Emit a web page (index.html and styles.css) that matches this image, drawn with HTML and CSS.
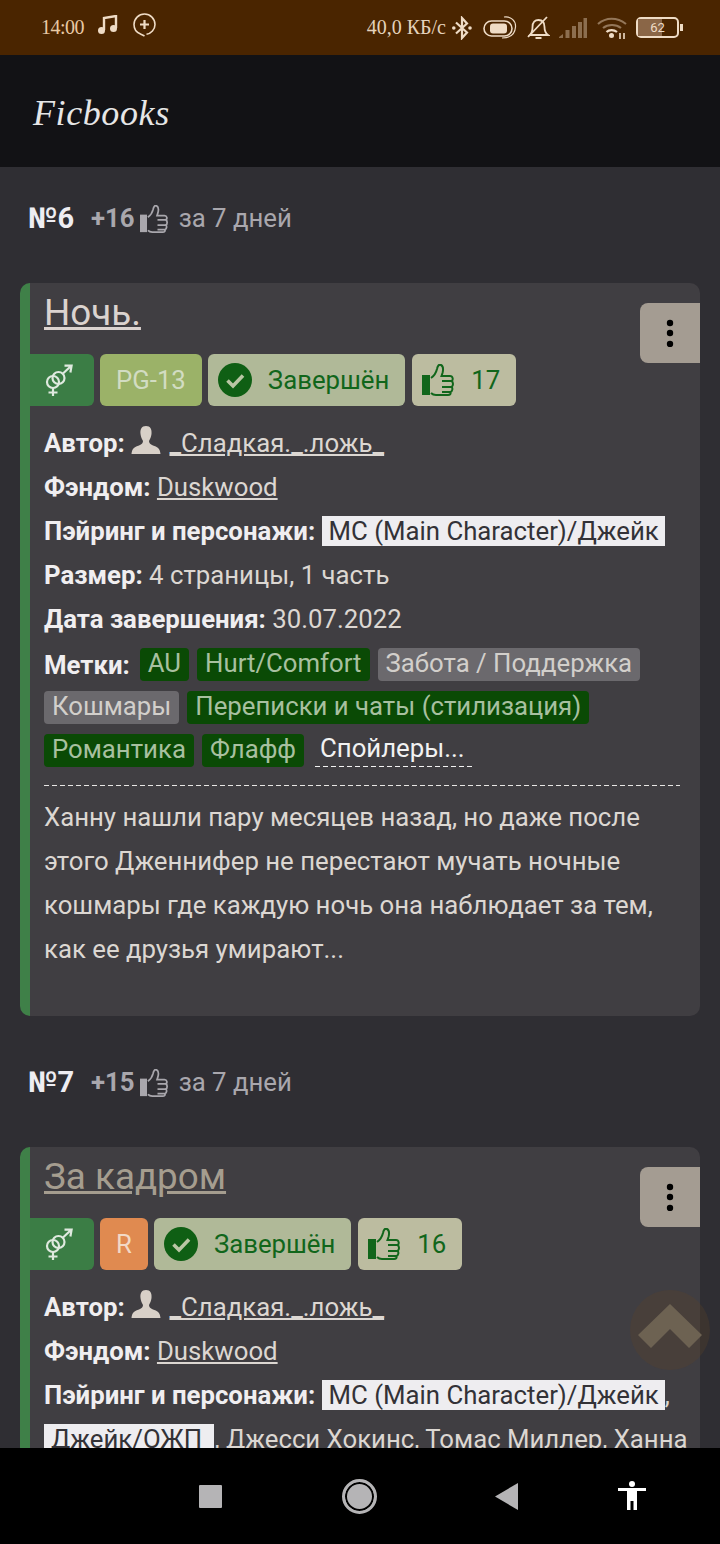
FILE: index.html
```html
<!doctype html>
<html lang="ru">
<head>
    <meta charset="UTF-8">
    <meta name="viewport" content="width=device-width, initial-scale=1.0">
    <link rel="stylesheet" href="styles.css">
    <title>Ficbooks</title>
</head>
<body>
<svg class="defs" width="0" height="0">
    <symbol id="thumb" viewBox="0 0 32 32">
        <rect x="0" y="11" width="8" height="20" fill="currentColor"/>
        <path d="M9 14 C12 12 14 9 15 5 C15.5 2 17 0 19 1 C21 2 21.5 5 20.5 9 L19.5 12 H28 C31 12 31.5 16 29.5 17 C31.5 18 31.5 22 29.5 23 C31 24 30.5 27.5 28.5 28 C29 30 28 31 26 31 H14 C12 31 10 30 9 29 M20 17 H29 M20 23 H29 M20 28 H28" fill="none" stroke="currentColor" stroke-width="2"/>
    </symbol>
    <symbol id="gender" viewBox="0 0 28 33">
        <g fill="none" stroke="currentColor" stroke-width="2.2">
            <circle cx="8" cy="18" r="6"/>
            <circle cx="13.500" cy="14" r="6"/>
            <path d="M18 9.500 L26 2 M19.500 1.600 H26.600 L25.400 8.500 M8 24 V32 M3.500 28.500 H12.500"/>
        </g>
    </symbol>
    <symbol id="check" viewBox="0 0 34 34">
        <circle cx="17" cy="17" r="17" fill="#0f5f14"/>
        <path d="M9.5 17.5 L15 23 L25 12.5" fill="none" stroke="#b9c6a4" stroke-width="3.6"/>
    </symbol>
    <symbol id="person" viewBox="0 0 30 28">
        <path d="M15 0 C19.5 0 21 3.5 20.5 8 C20.2 11 19 13 18 15 C18 17 19 18 22 19.5 C26 21 29 22 29.500 28 H0.500 C1 22 4 21 8 19.5 C11 18 12 17 12 15 C11 13 9.800 11 9.500 8 C9 3.500 10.500 0 15 0 Z" fill="currentColor"/>
    </symbol>
    <symbol id="dots" viewBox="0 0 8 28">
        <circle cx="4" cy="4" r="3.200" fill="#000"/>
        <circle cx="4" cy="14" r="3.200" fill="#000"/>
        <circle cx="4" cy="25" r="3.200" fill="#000"/>
    </symbol>
</svg>

<header class="status-bar">
    <span class="status-time">14:00</span>
    <svg class="icon-music" width="20" height="20" viewBox="0 0 20 20">
        <path d="M6 15 V3 L18 1 V13" fill="none" stroke="currentColor" stroke-width="2.400"/>
        <circle cx="3.500" cy="15.500" r="3.500" fill="currentColor"/>
        <circle cx="15.500" cy="13.500" r="3.500" fill="currentColor"/>
    </svg>
    <svg class="icon-chat" width="23" height="25" viewBox="0 0 23 25">
        <path d="M11.500 23 C9.500 21.800 8.500 21.500 7.500 21 C3.500 19.500 1 16 1 11.500 C1 5.700 5.700 1 11.500 1 C17.300 1 22 5.700 22 11.500 C22 16.500 18 20.500 13.500 21.300" fill="none" stroke="currentColor" stroke-width="1.600"/>
        <path d="M11.500 7 V16 M7 11.500 H16" stroke="currentColor" stroke-width="2.200"/>
    </svg>
    <span class="status-speed">40,0 КБ/с</span>
    <svg class="icon-bt" width="20" height="24" viewBox="0 0 20 24">
        <path d="M4 6.500 L15 16.500 L10 22 V2 L15 7.500 L4 17.500" fill="none" stroke="currentColor" stroke-width="2.200"/>
        <circle cx="1.800" cy="12" r="1.800" fill="currentColor"/>
        <circle cx="18" cy="12" r="1.800" fill="currentColor"/>
    </svg>
    <svg class="icon-pill" width="34" height="24" viewBox="0 0 34 24">
        <rect x="1" y="5" width="28" height="15" rx="7.500" fill="none" stroke="currentColor" stroke-width="1.600"/>
        <rect x="7" y="7.500" width="17" height="10" rx="3" fill="currentColor"/>
        <path d="M21 1 C28 0 33 5 32.500 11 C32 18 27 22 19 22" fill="none" stroke="currentColor" stroke-width="1.200"/>
    </svg>
    <svg class="icon-bell" width="23" height="24" viewBox="0 0 23 24">
        <path d="M3 19 C5 17 5.500 14 5.500 11 C5.500 6 8 4 11.500 4 C15 4 17.500 6 17.500 11 C17.500 14 18 17 21 19 Z M8.500 22 H14.500" fill="none" stroke="currentColor" stroke-width="1.800"/>
        <path d="M1 21 L20 1" stroke="currentColor" stroke-width="1.800"/>
    </svg>
    <svg class="icon-signal" width="28" height="20" viewBox="0 0 28 20">
        <g fill="currentColor" opacity="0.4">
            <path d="M0 19 L4 16 V20 H0 Z"/>
            <rect x="6.500" y="12" width="4" height="8"/>
            <rect x="13" y="8" width="4" height="12"/>
            <rect x="19" y="4" width="4" height="16"/>
            <rect x="24.500" y="0" width="3.500" height="20"/>
        </g>
    </svg>
    <svg class="icon-wifi" width="30" height="22" viewBox="0 0 30 22">
        <g fill="none" stroke="currentColor" stroke-width="2.200">
            <path d="M1 7 C9 0 20 0 29 7" opacity="0.45"/>
            <path d="M6 11 C11 7 19 7 24 11" opacity="0.45"/>
            <path d="M9.500 15 C12 12.500 17 12.500 20 15"/>
        </g>
        <circle cx="14.500" cy="18.500" r="2.500" fill="currentColor"/>
        <path d="M23 16 V22 M27 16 V22" stroke="currentColor" stroke-width="1.600"/>
    </svg>
    <div class="battery">
        <div class="battery-body">
            <div class="battery-fill"></div>
            <span class="battery-num">62</span>
        </div>
        <div class="battery-tip"></div>
    </div>
</header>

<div class="toolbar">Ficbooks</div>

<main class="content">
    <h2 class="top-head">
        <span class="top-num">№6</span>
        <b class="top-plus">+16</b>
        <svg class="icon-thumb-small"><use href="#thumb"/></svg>
        <span class="top-days">за 7 дней</span>
    </h2>

    <article class="card">
        <a class="card-title" href="#">Ночь.</a>
        <button class="card-menu"><svg width="8" height="28"><use href="#dots"/></svg></button>
        <div class="badges">
            <span class="badge badge-gender"><svg width="28" height="33"><use href="#gender"/></svg></span>
            <span class="badge badge-pg">PG-13</span>
            <span class="badge badge-status"><svg width="34" height="34"><use href="#check"/></svg>Завершён</span>
            <span class="badge badge-like"><svg width="32" height="32"><use href="#thumb"/></svg>17</span>
        </div>
        <div class="meta"><b>Автор:</b> <svg class="icon-person"><use href="#person"/></svg> <a href="#">_Сладкая._.ложь_</a></div>
        <div class="meta"><b>Фэндом:</b> <a href="#">Duskwood</a></div>
        <div class="meta"><b>Пэйринг и персонажи:</b> <span class="pairing">МС (Main Character)/Джейк</span></div>
        <div class="meta"><b>Размер:</b> 4 страницы, 1 часть</div>
        <div class="meta"><b>Дата завершения:</b> 30.07.2022</div>
        <div class="tags">
            <b class="tags-label">Метки:</b>
            <span class="tag tag-green">AU</span>
            <span class="tag tag-green">Hurt/Comfort</span>
            <span class="tag tag-gray">Забота / Поддержка</span>
            <span class="tag tag-gray">Кошмары</span>
            <span class="tag tag-green">Переписки и чаты (стилизация)</span>
            <span class="tag tag-green">Романтика</span>
            <span class="tag tag-green">Флафф</span>
            <span class="spoilers">Спойлеры...</span>
        </div>
        <hr class="divider">
        <p class="descr">Ханну нашли пару месяцев назад, но даже после этого Дженнифер не перестают мучать ночные кошмары где каждую ночь она наблюдает за тем, как ее друзья умирают...</p>
    </article>

    <h2 class="top-head">
        <span class="top-num">№7</span>
        <b class="top-plus">+15</b>
        <svg class="icon-thumb-small"><use href="#thumb"/></svg>
        <span class="top-days">за 7 дней</span>
    </h2>

    <article class="card">
        <a class="card-title visited" href="#">За кадром</a>
        <button class="card-menu"><svg width="8" height="28"><use href="#dots"/></svg></button>
        <div class="badges">
            <span class="badge badge-gender"><svg width="28" height="33"><use href="#gender"/></svg></span>
            <span class="badge badge-r">R</span>
            <span class="badge badge-status"><svg width="34" height="34"><use href="#check"/></svg>Завершён</span>
            <span class="badge badge-like"><svg width="32" height="32"><use href="#thumb"/></svg>16</span>
        </div>
        <div class="meta"><b>Автор:</b> <svg class="icon-person"><use href="#person"/></svg> <a href="#">_Сладкая._.ложь_</a></div>
        <div class="meta"><b>Фэндом:</b> <a href="#">Duskwood</a></div>
        <div class="meta"><b>Пэйринг и персонажи:</b> <span class="pairing">МС (Main Character)/Джейк</span>, <span class="pairing">Джейк/ОЖП&nbsp;</span>, Джесси Хокинс, Томас Миллер, Ханна</div>
    </article>

    <button class="scroll-top">
        <svg width="64" height="44" viewBox="0 0 64 44"><path d="M32 0 L64 31 L51 44 L32 25 L13 44 L0 31 Z" fill="#6d6252"/></svg>
    </button>
</main>

<nav class="nav-bar">
    <div class="nav-square"></div>
    <div class="nav-circle"></div>
    <svg class="nav-back" width="23" height="27" viewBox="0 0 23 27"><path d="M23 0 V27 L0 13.500 Z" fill="#b5b4b6"/></svg>
    <svg class="nav-access" width="28" height="30" viewBox="0 0 28 30">
        <circle cx="14" cy="3" r="3" fill="#fff"/>
        <path d="M0 7 H28 V10 H19 V29 H15.500 V20 H12.500 V29 H9 V10 H0 Z" fill="#fff"/>
    </svg>
</nav>
</body>
</html>
```

FILE: styles.css
```css
* {
    box-sizing: border-box;
}

html, body {
    height: 100%;
}

body {
    display: flex;
    flex-direction: column;
    width: 720px;
    height: 1544px;
    margin: 0;
    overflow: hidden;
    color: #dcd7d2;
    background: #2f2e33;
    font-family: Roboto, sans-serif;
    font-size: 25.75px;
}

.defs {
    position: absolute;
}

a {
    color: inherit;
}

/* status bar */
.status-bar {
    display: flex;
    flex: none;
    align-items: center;
    height: 55px;
    padding: 0 37px 0 41px;
    color: #efdcc6;
    background: #4a2500;
}

.status-time, .status-speed {
    font-family: "Liberation Serif", serif;
    font-size: 20px;
    letter-spacing: -0.5px;
    color: #e8c9a5;
}

.status-speed {
    margin-left: auto;
    letter-spacing: 0;
    color: #e4d2bc;
    white-space: nowrap;
}

.icon-music {
    margin-left: 14px;
    margin-bottom: 6px;
}

.icon-chat {
    margin-left: 15px;
    margin-bottom: 4px;
}

.icon-bt {
    margin-left: 6px;
}

.icon-pill {
    margin-left: 11px;
}

.icon-bell {
    margin-left: 10px;
}

.icon-signal {
    margin-left: 9px;
}

.icon-wifi {
    margin-left: 10px;
}

.battery {
    display: flex;
    align-items: center;
    margin-left: 9px;
}

.battery-body {
    position: relative;
    width: 43px;
    height: 21px;
    border: 2px solid #efdcc6;
    border-radius: 5px;
}

.battery-fill {
    width: 62%;
    height: 100%;
    background: #8a6647;
}

.battery-num {
    position: absolute;
    top: 0;
    left: 0;
    width: 100%;
    font-size: 13px;
    line-height: 17px;
    text-align: center;
    color: #efdcc6;
}

.battery-tip {
    width: 3px;
    height: 7px;
    margin-left: 1px;
    background: #efdcc6;
}

/* app toolbar */
.toolbar {
    flex: none;
    height: 112px;
    padding-left: 33px;
    color: #e6e6e6;
    background: #121215;
    font-family: "Liberation Serif", serif;
    font-style: italic;
    font-size: 36px;
    line-height: 116px;
    letter-spacing: 0.6px;
}

/* list */
.content {
    position: relative;
    flex: 1;
    min-height: 0;
    padding: 35px 20px 0;
    overflow: hidden;
}

.top-head {
    display: flex;
    align-items: center;
    height: 31px;
    margin: 0 0 50px;
    padding-left: 8px;
    color: #a9a7ad;
    font-size: 25.75px;
    font-weight: 400;
}

.top-num {
    margin-right: 17px;
    color: #eeedf2;
    font-size: 29px;
    font-weight: 700;
}

.icon-thumb-small {
    width: 28px;
    height: 28px;
    margin: 2px 11px 0 5px;
}

.card {
    position: relative;
    margin-bottom: 50px;
    padding: 8px 10px 45px 14px;
    border-left: 10px solid #3f8048;
    border-radius: 10px;
    background: #403e42;
}

.card-title {
    display: block;
    width: max-content;
    color: #dbd3cf;
    font-size: 36.800px;
    line-height: 44px;
}

.card-title.visited {
    color: #a59d8f;
}

.card-menu {
    position: absolute;
    top: 20px;
    right: 0;
    display: flex;
    align-items: center;
    justify-content: center;
    width: 60px;
    height: 60px;
    padding: 0;
    border: 0;
    border-radius: 8px 0 0 8px;
    background: #a49c92;
}

.badges {
    display: flex;
    gap: 6px;
    margin: 19px 0 15px -14px;
}

.badge {
    display: flex;
    align-items: center;
    height: 52px;
    padding: 0 16px;
    border-radius: 6px;
    white-space: nowrap;
}

.badge-gender {
    justify-content: center;
    width: 64px;
    padding: 0 6px 0 0;
    border-radius: 0 6px 6px 0;
    color: #dfe9df;
    background: #3b7d45;
}

.badge-pg {
    color: #d2dcc2;
    background: #9bb268;
}

.badge-r {
    color: #f2d9c6;
    background: #e08a50;
}

.badge-status {
    padding: 0 16px 0 10px;
    color: #11661b;
    background: #b0b998;
}

.badge-status svg {
    margin-right: 16px;
}

.badge-like {
    margin-left: 1px;
    padding: 0 16px 0 10px;
    color: #11661b;
    background: #bcbca0;
}

.badge-like svg {
    margin-right: 17px;
}

.meta {
    line-height: 44px;
}

.meta b, .tags-label {
    color: #f0eef0;
    font-weight: 700;
}

.icon-person {
    width: 30px;
    height: 28px;
    margin: 0 2px 0 0;
    color: #d8d0c8;
    vertical-align: -2px;
}

.pairing {
    padding: 0 6px 0 7px;
    color: #333237;
    background: #eeedf0;
}

.tags {
    display: flex;
    flex-wrap: wrap;
    align-items: center;
    gap: 10px 8px;
    margin-top: 7px;
    padding-right: 4px;
}

.tags-label {
    margin-right: 2px;
}

.tag {
    height: 33px;
    padding: 0 8px;
    border-radius: 4px;
    line-height: 31px;
}

.tag-green {
    color: #a8c0a0;
    background: #0a4a05;
}

.tag-gray {
    color: #d2cfcb;
    background: #6b696d;
}

.spoilers {
    height: 33px;
    margin-left: 3px;
    padding: 0 7px 0 5px;
    background: repeating-linear-gradient(90deg, #f2f2f2 0 5px, transparent 5px 8px) left bottom / 100% 1px no-repeat;
    color: #f2f2f2;
    line-height: 29px;
}

.divider {
    height: 1px;
    margin: 18px 10px 9px 0;
    border: 0;
    background: repeating-linear-gradient(90deg, #e8e6e4 0 5px, transparent 5px 8px);
}

.descr {
    margin: 0;
    line-height: 44px;
}

.scroll-top {
    position: absolute;
    top: 1123px;
    left: 630px;
    display: flex;
    align-items: center;
    justify-content: center;
    width: 80px;
    height: 80px;
    padding: 0 0 8px;
    border: 0;
    border-radius: 50%;
    background: rgba(92, 66, 40, 0.3);
}

/* android nav */
.nav-bar {
    display: flex;
    flex: none;
    align-items: center;
    height: 96px;
    padding-left: 199px;
    background: #000;
}

.nav-square {
    width: 23px;
    height: 23px;
    border-radius: 1px;
    background: #b5b4b6;
}

.nav-circle {
    width: 35px;
    height: 35px;
    margin-left: 120px;
    border: 3px solid #b5b4b6;
    border-radius: 50%;
    background: #b5b4b6;
    box-shadow: inset 0 0 0 2px #000;
}

.nav-back {
    margin-left: 118px;
}

.nav-access {
    margin-left: 100px;
}
```
